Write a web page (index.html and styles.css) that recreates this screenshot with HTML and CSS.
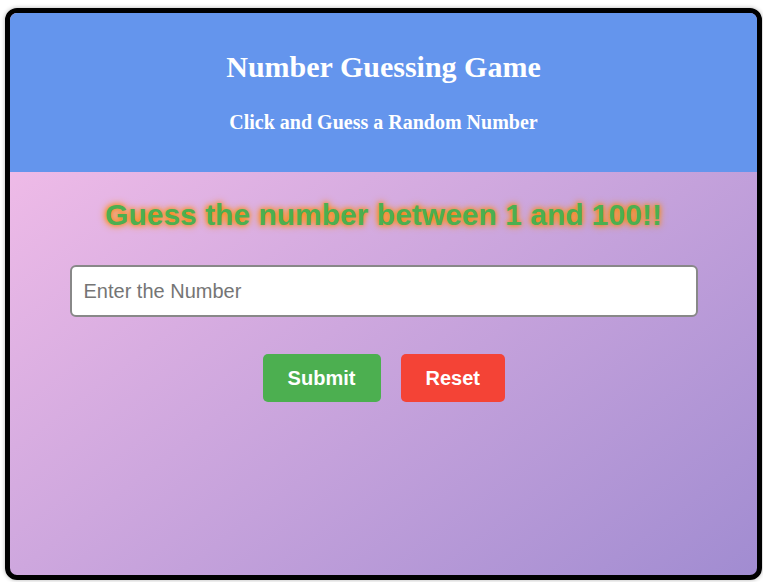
FILE: index.html
```html
<!DOCTYPE html>
<html>
<head>
<meta charset="utf-8">
<link rel="stylesheet" href="styles.css">
</head>
<body>
<div class="container">
  <header class="header">
    <h1 class="title">Number Guessing Game</h1>
    <h3 class="subtitle">Click and Guess a Random Number</h3>
  </header>
  <main class="game">
    <h2 class="prompt">Guess the number between 1 and 100!!</h2>
    <input class="guess" type="text" placeholder="Enter the Number">
    <div class="buttons">
      <button class="btn submit">Submit</button>
      <button class="btn reset">Reset</button>
    </div>
  </main>
</div>
</body>
</html>
```
FILE: styles.css
```css
html, body { height: 100%; }
body {
  margin: 0;
  padding: 8px 1px 2px 5px;
  box-sizing: border-box;
  background: #fff;
}
.container {
  height: 100%;
  box-sizing: border-box;
  border: 5px solid #000;
  border-radius: 12px;
  overflow: hidden;
  display: flex;
  flex-direction: column;
  box-shadow: 0 0 4px rgba(0,0,0,0.3);
  background: linear-gradient(to bottom right, #fbc2eb, #a18cd1);
}
.header {
  background: #6495ed;
  color: #fff;
  text-align: center;
  height: 159px;
  box-sizing: border-box;
  padding-top: 37px;
  font-family: "Liberation Serif", "Times New Roman", serif;
}
.title {
  margin: 0;
  font-size: 30px;
  font-weight: bold;
  line-height: 34px;
}
.subtitle {
  margin: 26px 0 0;
  font-size: 20px;
  font-weight: bold;
  line-height: 24px;
}
.game {
  flex: 1;
  display: flex;
  flex-direction: column;
  align-items: center;
  font-family: "Liberation Sans", Arial, sans-serif;
}
.prompt {
  margin: 25px 0 0;
  font-size: 30px;
  line-height: 36px;
  font-weight: bold;
  color: #4caf50;
  text-shadow: 0 0 5px #ff7f00, 0 0 9px #ff9800;
}
.guess {
  margin-top: 32px;
  width: 628px;
  height: 52px;
  box-sizing: border-box;
  border: 2px solid #888;
  border-radius: 6px;
  padding: 0 12px;
  font-family: "Liberation Sans", Arial, sans-serif;
  font-size: 20px;
  background: #fff;
  outline: none;
}
.guess::placeholder { color: #757575; }
.buttons {
  margin-top: 37px;
  display: flex;
  gap: 20px;
}
.btn {
  height: 48px;
  border: none;
  border-radius: 5px;
  color: #fff;
  font-family: "Liberation Sans", Arial, sans-serif;
  font-size: 20px;
  font-weight: bold;
  padding: 0 25px;
}
.submit { background: #4caf50; width: 118px; }
.reset { background: #f44336; width: 104px; }
```
